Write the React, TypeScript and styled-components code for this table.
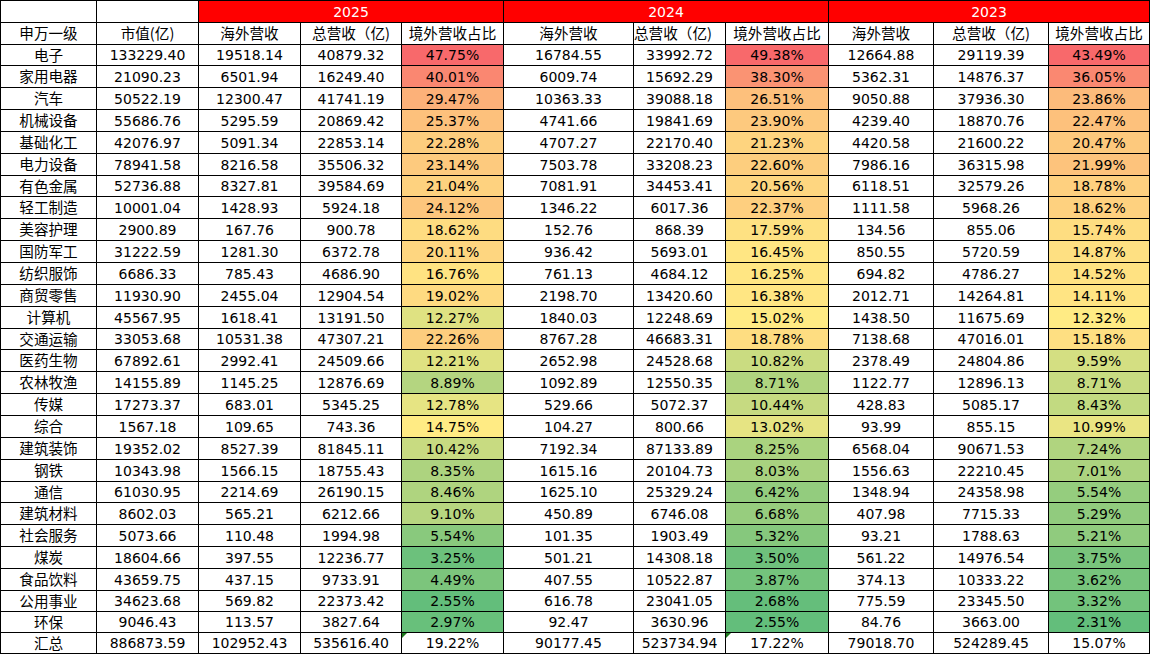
import * as React from 'react'
import styled, { createGlobalStyle, css } from 'styled-components'

type Year = { overseas: string; total: string; ratio: number }
type Industry = { name: string; cap: string; years: Year[] }

const raw: [string, string, string, string, number, string, string, number, string, string, number][] = [
  ['电子', '133229.40', '19518.14', '40879.32', 47.75, '16784.55', '33992.72', 49.38, '12664.88', '29119.39', 43.49],
  ['家用电器', '21090.23', '6501.94', '16249.40', 40.01, '6009.74', '15692.29', 38.3, '5362.31', '14876.37', 36.05],
  ['汽车', '50522.19', '12300.47', '41741.19', 29.47, '10363.33', '39088.18', 26.51, '9050.88', '37936.30', 23.86],
  ['机械设备', '55686.76', '5295.59', '20869.42', 25.37, '4741.66', '19841.69', 23.9, '4239.40', '18870.76', 22.47],
  ['基础化工', '42076.97', '5091.34', '22853.14', 22.28, '4707.27', '22170.40', 21.23, '4420.58', '21600.22', 20.47],
  ['电力设备', '78941.58', '8216.58', '35506.32', 23.14, '7503.78', '33208.23', 22.6, '7986.16', '36315.98', 21.99],
  ['有色金属', '52736.88', '8327.81', '39584.69', 21.04, '7081.91', '34453.41', 20.56, '6118.51', '32579.26', 18.78],
  ['轻工制造', '10001.04', '1428.93', '5924.18', 24.12, '1346.22', '6017.36', 22.37, '1111.58', '5968.26', 18.62],
  ['美容护理', '2900.89', '167.76', '900.78', 18.62, '152.76', '868.39', 17.59, '134.56', '855.06', 15.74],
  ['国防军工', '31222.59', '1281.30', '6372.78', 20.11, '936.42', '5693.01', 16.45, '850.55', '5720.59', 14.87],
  ['纺织服饰', '6686.33', '785.43', '4686.90', 16.76, '761.13', '4684.12', 16.25, '694.82', '4786.27', 14.52],
  ['商贸零售', '11930.90', '2455.04', '12904.54', 19.02, '2198.70', '13420.60', 16.38, '2012.71', '14264.81', 14.11],
  ['计算机', '45567.95', '1618.41', '13191.50', 12.27, '1840.03', '12248.69', 15.02, '1438.50', '11675.69', 12.32],
  ['交通运输', '33053.68', '10531.38', '47307.21', 22.26, '8767.28', '46683.31', 18.78, '7138.68', '47016.01', 15.18],
  ['医药生物', '67892.61', '2992.41', '24509.66', 12.21, '2652.98', '24528.68', 10.82, '2378.49', '24804.86', 9.59],
  ['农林牧渔', '14155.89', '1145.25', '12876.69', 8.89, '1092.89', '12550.35', 8.71, '1122.77', '12896.13', 8.71],
  ['传媒', '17273.37', '683.01', '5345.25', 12.78, '529.66', '5072.37', 10.44, '428.83', '5085.17', 8.43],
  ['综合', '1567.18', '109.65', '743.36', 14.75, '104.27', '800.66', 13.02, '93.99', '855.15', 10.99],
  ['建筑装饰', '19352.02', '8527.39', '81845.11', 10.42, '7192.34', '87133.89', 8.25, '6568.04', '90671.53', 7.24],
  ['钢铁', '10343.98', '1566.15', '18755.43', 8.35, '1615.16', '20104.73', 8.03, '1556.63', '22210.45', 7.01],
  ['通信', '61030.95', '2214.69', '26190.15', 8.46, '1625.10', '25329.24', 6.42, '1348.94', '24358.98', 5.54],
  ['建筑材料', '8602.03', '565.21', '6212.66', 9.1, '450.89', '6746.08', 6.68, '407.98', '7715.33', 5.29],
  ['社会服务', '5073.66', '110.48', '1994.98', 5.54, '101.35', '1903.49', 5.32, '93.21', '1788.63', 5.21],
  ['煤炭', '18604.66', '397.55', '12236.77', 3.25, '501.21', '14308.18', 3.5, '561.22', '14976.54', 3.75],
  ['食品饮料', '43659.75', '437.15', '9733.91', 4.49, '407.55', '10522.87', 3.87, '374.13', '10333.22', 3.62],
  ['公用事业', '34623.68', '569.82', '22373.42', 2.55, '616.78', '23041.05', 2.68, '775.59', '23345.50', 3.32],
  ['环保', '9046.43', '113.57', '3827.64', 2.97, '92.47', '3630.96', 2.55, '84.76', '3663.00', 2.31],
]

const industries: Industry[] = raw.map((r) => ({
  name: r[0],
  cap: r[1],
  years: [
    { overseas: r[2], total: r[3], ratio: r[4] },
    { overseas: r[5], total: r[6], ratio: r[7] },
    { overseas: r[8], total: r[9], ratio: r[10] },
  ],
}))

const summary = {
  cap: '886873.59',
  years: [
    { overseas: '102952.43', total: '535616.40', ratio: 19.22 },
    { overseas: '90177.45', total: '523734.94', ratio: 17.22 },
    { overseas: '79018.70', total: '524289.45', ratio: 15.07 },
  ],
}

const yearLabels = ['2025', '2024', '2023']

// excel style 3 colour scale: green (min) -> yellow (median) -> red (max)
const LOW = [99, 190, 123]
const MID = [255, 235, 132]
const HIGH = [248, 105, 107]

const mix = (a: number[], b: number[], t: number) =>
  `rgb(${a.map((v, i) => Math.round(v + (b[i] - v) * t)).join(',')})`

const scaleFor = (values: number[]) => {
  const sorted = [...values].sort((a, b) => a - b)
  const min = sorted[0]
  const max = sorted[sorted.length - 1]
  const mid = sorted[Math.floor(sorted.length / 2)]
  return (v: number) =>
    v <= mid ? mix(LOW, MID, (v - min) / (mid - min || 1)) : mix(MID, HIGH, (v - mid) / (max - mid || 1))
}

const scales = [0, 1, 2].map((y) => scaleFor(industries.map((d) => d.years[y].ratio)))

// row spacing in px (line to line); the gap line takes one pixel of each
const rowSpacing = [22, 22, 21, ...Array.from({ length: 24 }, (_, i) => ([5, 12, 19].includes(i) ? 21 : 22)), 21, 21, 21]
const rowTracks = rowSpacing.map((h) => `${h - 1}px`).join(' ')

const GlobalStyle = createGlobalStyle`
  html, body {
    margin: 0;
    padding: 0;
    background: #fff;
  }
  body {
    font-family: "DejaVu Sans", "Noto Sans CJK SC", sans-serif;
  }
`

const Sheet = styled.div`
  display: grid;
  grid-template-columns: 95px 101px 101px 100px 101px 129px 91px 102px 104px 114px 100px;
  grid-template-rows: ${rowTracks};
  gap: 1px;
  padding: 1px;
  background: #000;
  width: max-content;
`

const Cell = styled.div<{ $bg?: string; $cjk?: boolean; $start?: boolean }>`
  position: relative;
  display: flex;
  align-items: center;
  justify-content: ${(p) => (p.$start ? 'flex-start' : 'center')};
  overflow: hidden;
  white-space: nowrap;
  background: ${(p) => p.$bg || '#fff'};
  color: #000;
  font-family: "DejaVu Sans", "Noto Sans CJK SC", sans-serif;
  font-size: ${(p) => (p.$cjk ? '14.6px' : '14px')};
  line-height: 1;
  ${(p) =>
    p.$cjk &&
    css`
      font-family: "Noto Sans CJK SC", sans-serif;
    `}
`

const YearCell = styled(Cell)`
  grid-column: span 3;
  background: #ff0000;
  color: #fff;
`

const Flag = styled.span`
  position: absolute;
  top: 0;
  left: 0;
  width: 0;
  height: 0;
  border-top: 5px solid #1e7a1e;
  border-right: 5px solid transparent;
`

const pct = (v: number) => `${v.toFixed(2)}%`

export default function App() {
  return (
    <>
      <GlobalStyle />
      <Sheet>
        <Cell />
        <Cell />
        {yearLabels.map((y) => (
          <YearCell key={y}>{y}</YearCell>
        ))}

        <Cell $cjk>申万一级</Cell>
        <Cell $cjk>市值(亿)</Cell>
        {yearLabels.map((y, i) => (
          <React.Fragment key={y}>
            <Cell $cjk>海外营收</Cell>
            <Cell $cjk $start={i === 1}>总营收（亿)</Cell>
            <Cell $cjk>境外营收占比</Cell>
          </React.Fragment>
        ))}

        {industries.map((d) => (
          <React.Fragment key={d.name}>
            <Cell $cjk>{d.name}</Cell>
            <Cell>{d.cap}</Cell>
            {d.years.map((y, i) => (
              <React.Fragment key={i}>
                <Cell>{y.overseas}</Cell>
                <Cell>{y.total}</Cell>
                <Cell $bg={scales[i](y.ratio)}>{pct(y.ratio)}</Cell>
              </React.Fragment>
            ))}
          </React.Fragment>
        ))}

        <Cell $cjk>汇总</Cell>
        <Cell>{summary.cap}</Cell>
        {summary.years.map((y, i) => (
          <React.Fragment key={i}>
            <Cell>{y.overseas}</Cell>
            <Cell>{y.total}</Cell>
            <Cell>
              {i < 2 && <Flag />}
              {pct(y.ratio)}
            </Cell>
          </React.Fragment>
        ))}
      </Sheet>
    </>
  )
}
